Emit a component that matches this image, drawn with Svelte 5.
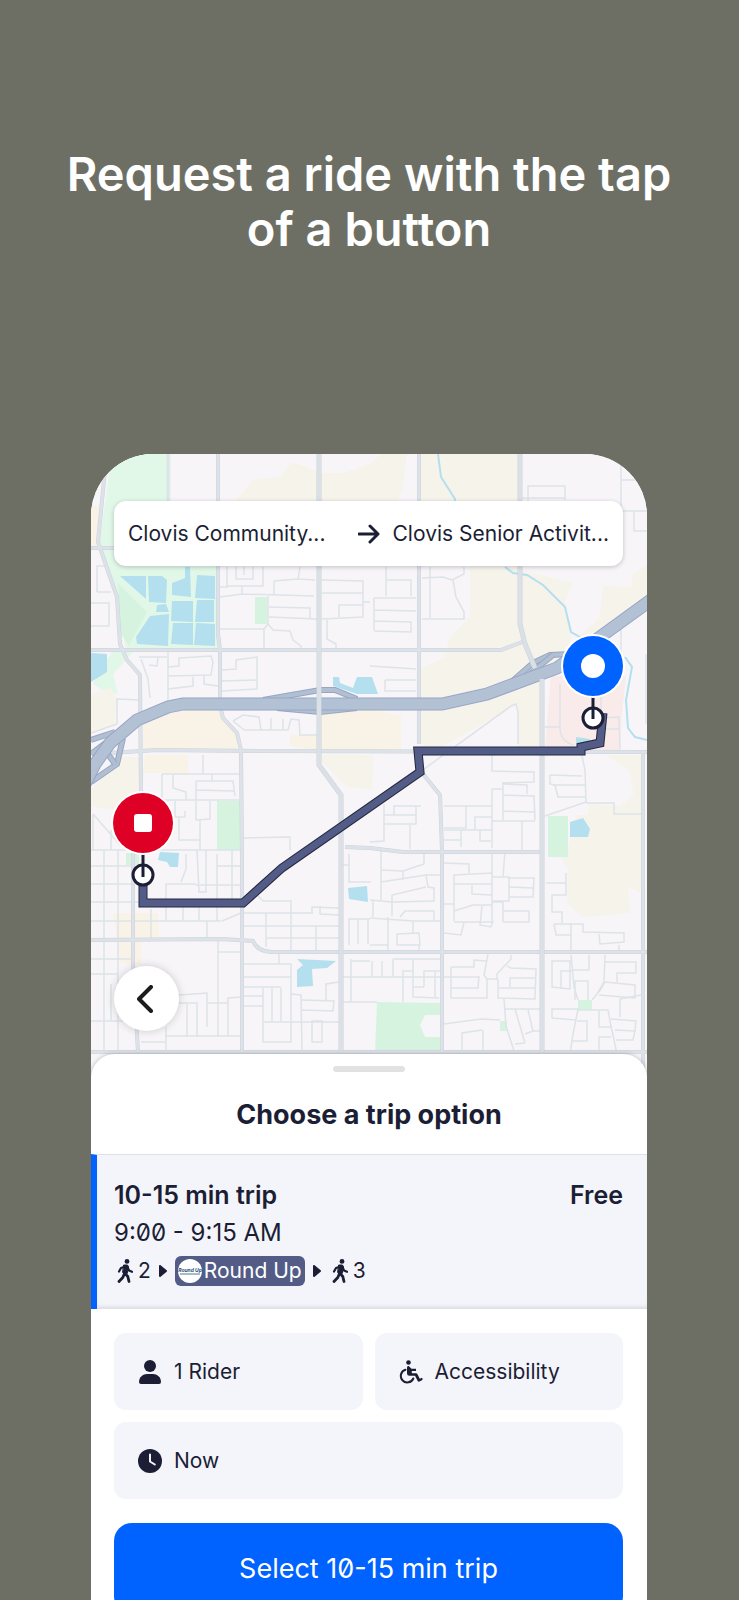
<script>
  const from = "Clovis Community...";
  const to = "Clovis Senior Activit...";

  // Land use areas, one list per fill
  const areas = [
    {
      name: "park-light",
      shapes: [
        "20,0 80,0 80,50 125,110 126,196 35,196 26,143 8,94 18,20",
        "21,198 42,198 22,220 27,240 14,238 2,230",
      ],
    },
    {
      name: "sand",
      shapes: [
        "142,50 162,26 189,23 201,8 232,19 252,19 279,10 290,0 316,0 311,36 306,50",
        "329,0 426,0 426,50 329,50",
        "379,112 427,112 434,117 481,129 474,149 480,180 478,206 449,220 449,296 427,296 427,250 345,296 329,290 329,215 352,204 359,183 379,163",
        "559,109 542,120 540,133 512,132 508,165 485,184 530,170 559,150",
        "485,361 550,361 550,439 537,433 539,459 492,463 476,449 477,416 470,403 477,395",
        "515,301 550,301 550,361 497,361 497,350 530,352 543,340 538,316",
        "229,301 282,301 281,335 256,333 232,309",
        "0,240 20,234 26,245 24,270 0,280",
        "30,303 49,303 49,336 22,356 0,352 0,336",
      ],
    },
    {
      name: "downtown",
      shapes: [
        "67,256 127,256 146,279 146,296 52,296 52,268",
        "54,301 97,301 97,319 52,319",
        "199,281 226,281 226,296 199,292",
        "229,259 279,255 310,262 310,296 229,296",
        "22,459 67,459 68,484 50,486 50,511 29,509",
        "0,52 8,52 6,92 0,92",
      ],
    },
    { name: "hospital", shapes: ["460,222 535,222 531,260 529,296 454,296"] },
    {
      name: "park",
      shapes: [
        "27,129 56,158 38,192 30,180",
        "164,143 176,143 176,170 164,170",
        "126,347 149,347 149,396 126,396",
        "457,362 477,362 477,403 457,403",
        "286,548 350,549 350,561 334,561 329,571 334,583 350,583 350,598 284,598",
        "487,546 501,546 501,556 487,556",
        "409,567 416,567 416,577 409,577",
        "35,399 48,399 48,411 35,411",
      ],
    },
    {
      name: "water",
      shapes: [
        "29,122 55,122 55,145",
        "57,122 71,122 76,126 75,149 58,148",
        "94,113 99,113 100,143 81,141 81,129 94,124",
        "106,121 124,122 124,145 104,144",
        "81,147 102,147 102,168 80,167",
        "106,146 123,146 123,168 104,168",
        "59,162 78,160 77,192 46,190 45,183",
        "82,169 102,169 102,191 80,190",
        "105,169 124,170 124,192 103,191",
        "66,151 75,150 78,158 65,158",
        "0,199 16,200 16,218 0,228",
        "242,223 248,223 249,229 262,234 266,223 281,223 287,240 266,240 242,232",
        "69,398 88,399 87,413 79,413 76,408 67,406",
        "257,434 276,432 277,448 258,445",
        "206,505 245,507 236,514 221,515 222,532 206,533 206,516 212,511",
        "479,368 492,364 499,375 497,383 479,383",
        "485,283 499,285 497,290 485,289",
      ],
    },
  ];

  const streams = [
    "M347 0L350 23 364 45V50",
    "M414 113L422 119 436 121 452 131 474 153 480 178 489 183",
    "M534 203L541 213 535 246 537 274 544 283 556 286",
  ];

  const streets = [
    "M129 133H136V113M129 143L151 140 223 142M151 132V140M136 132H172V113M145 113V125H162V113M153 113V121",
    "M183 141V127L207 125 224 126M207 125L209 113M178 153L219 154V164M178 163L226 165M177 142V170L173 175V195M129 175H173M177 170L182 176 199 177 202 186 210 192V196",
    "M231 126L272 127V163L231 165M231 139H272M248 163V151H272M236 166V185L245 190V195M272 148H279",
    "M0 149H18V172H0M6 138V112H14M6 138H20",
    "M295 113V142M296 126H320V142M283 144H325M283 144V176M283 156L325 157M283 167L320 168V178L283 177",
    "M331 124L352 123 361 126 373 120V113M339 113V164M362 126L365 143 373 158V165H331",
    "M437 47V32H474V46M430 44H474M530 10V57H556M530 26H550M543 57V77H556M530 160V200",
    "M48 203H76M77 198V246M77 213L88 212V204L120 202 122 208 120 221 77 222M77 235L102 232V223M113 222V230L127 232",
    "M131 216L145 215V206L166 203V235L131 237M131 227L166 226M50 205L57 225 59 244M58 211L66 212 67 203M26 270V245L50 246M0 279L26 270",
    "M142 267L152 261 168 263 170 276M153 276H197L200 265 208 266 209 281H226M180 276V264M192 276V265M142 267L153 276",
    "M112 301V320M71 320H148M71 320V346M82 320V334L95 338V346M105 327H142L144 342M105 327V346M105 336L143 337M71 346H148M121 320V327",
    "M84 347V363H94V357M105 347V366L119 365V347M88 364V386H109M109 366V395M152 384L199 383V396M2 360L30 392M2 360V396M20 376V396",
    "M329 318L420 252 425 250 427 258V290M294 226V237H325M294 226H325M279 212L325 215",
    "M454 273H469M469 230V275Q470 288 483 291M510 264L528 263 529 295M510 275H529M510 240V256M555 200V270",
    "M401 300V317L443 318V328L411 329M412 329V367M411 330L436 331V340M401 335H411M401 335V394M412 341L443 342 444 366M412 357L444 358M401 367H444M431 367V396",
    "M459 321L491 322M459 321V330L464 331 467 343H494M462 331H494M491 302L494 316 495 348 454 362M495 349H523V360H550",
    "M353 352H401M375 352V374H353M303 351V361M293 361H325V370H293M303 352H330M325 352V361M293 350V387L279 388M353 386H370M370 376V393M353 376H401M384 376V363H401M389 376V387H400M319 371V395",
    "M13 396V598M27 396V600M0 412H42M0 430H42M0 448H50M0 467H130M0 505H42M0 520H27M0 567H74M20 530V567M0 396H150",
    "M95 400V415L90 428M75 467V430H105M106 396L108 438H115V396M126 400V467M141 396V448M126 412H150M105 431H150M92 450V467M108 450V467M60 455V485M131 467L150 459M116 467V484",
    "M127 486V582M127 498H150M151 459H222M175 459V493M151 472H248M175 484H248M225 472V497M221 459V453L248 454M229 452V460L248 461M165 440L172 447H200V496",
    "M188 498V510M151 510H200M151 523H200M200 510V589M151 533H190M172 533V588H200M151 542H172M151 552H172M181 534V568M190 534V568M172 568H211",
    "M200 540L210 541 211 598M211 546L243 547 242 557 211 556M211 568H248M221 588V567H231V588ZM235 546V530L248 528M88 541L116 539V573M116 549H137M137 582V544L150 543M88 549H106V582M96 549V582M74 582H150M75 573V598M50 588H75",
    "M258 465V491M267 465V490M277 465V490M257 465H279M260 505V548M260 507H279M250 523H279M258 400V428H280M250 411H258M250 548H286",
    "M290 396V446M333 410V398M290 416L312 417 333 410M312 417V426M290 428L335 421H349M335 421L337 433 343 434V447L301 448M301 462V441L335 433M279 446L301 448M282 446V463M279 464L322 467V479M322 467H349",
    "M297 463V496M309 463L314 457H343V467M306 491V480L328 479 329 491ZM279 491H297M328 491V498",
    "M353 409L378 410V419M363 467V421L401 419V468H363M363 430H401M381 431V440L401 441M401 396V419M414 396L412 423M401 423H418V447H401M418 424H443L442 443H418M418 433L442 434M401 448H412V468M412 457H438V468H412",
    "M353 450H363M363 457L382 451H401M391 452L389 471 400 473 402 467M373 468L370 481 353 479",
    "M455 429H475V419M475 429V441H461V458H471V469M463 470L465 481H480M463 470H492V478L533 479V488L509 490 508 480M480 470V497M528 491V497",
    "M279 523H349M322 506V543L348 544M333 533V517H349M333 533H323M344 517V543M312 548V517H322M302 505H349M302 505V523M281 507V523M291 507V523",
    "M360 513H383V506L396 507M360 513V544H396V525L393 521 397 500M360 534H387L388 522M353 523H388M396 525H406V520L420 505V501M407 525V544L444 545 445 515 420 514 416 512M407 534H444M419 533V524H445",
    "M413 545L415 572 424 600M414 555H450M424 555L434 589M437 556L442 577H450M424 590L434 589M353 570L390 565 409 566M371 598V579L391 576M392 576V598M434 580L442 577",
    "M461 507H479V535L461 533ZM470 535V517H481M480 501L483 533 487 546M498 501V516H481M514 501L513 528 506 540 501 546M514 508H545V519H526V528M508 538L514 528 544 531V544L508 541",
    "M461 564V555H487L482 580 479 600M461 564L485 566M487 556H517L520 572 526 600M508 556V573H520M529 545V563M520 565L545 567 544 577 542 586H525M544 577L524 576M486 567H496V587H481M508 600V583H520M529 545L550 541M484 546V527H497V546",
  ];

  const avenues = [
    "M14 16L7 88 26 143 29 190 36 206 49 221 50 340 50 396M42 396V510L47 598",
    "M127 0V180L129 196V252L132 264 146 279 150 296 151 406V598",
    "M328 0V290M332 320L349 341 351 396V598",
    "M0 94H24M0 196H410L434 187M19 299L66 296 170 297 556 298",
    "M254 393L279 394 312 398H450M0 486L130 485 162 487Q166 497 180 498H556M0 598H556",
    "M552 298V620",
  ];

  const boulevards = [
    "M228 0V311L250 341V598",
    "M429 0V170L434 190 444 214",
    "M451 225V598",
  ];

  const freeway = "M-8 334L4 310 19 289 46 266 77 253 92 250H351L396 240 466 214 509 183 560 146";
  const ramps = [
    "M172 246L229 236H244L266 245",
    "M186 254L229 258 266 254",
    "M418 230L442 209 459 201 480 200",
    "M434 224L462 201",
    "M0 286L24 278",
    "M0 300L16 288",
    "M32 284L26 310 0 328",
    "M14 296L24 310",
  ];
  const route = "M512 259L509 289 490 293V297H327L329 318 191 414 152 449H52V421";
</script>

<main>
  <h1>Request a ride with the tap of a button</h1>

  <div class="phone">
    <section class="map-area">
      <svg class="map" viewBox="0 0 556 620" role="img" aria-label="Route map">
        {#each areas as area}
          {#each area.shapes as points}
            <polygon class={area.name} {points} />
          {/each}
        {/each}
        {#each streams as d}
          <path class="stream" {d} />
        {/each}
        {#each streets as d}
          <path class="street" {d} />
        {/each}
        <path class="street wide" d="M77 0V50" />
        {#each avenues as d}
          <path class="avenue-edge" {d} />
        {/each}
        {#each avenues as d}
          <path class="avenue" {d} />
        {/each}
        {#each ramps as d}
          <path class="ramp-edge" {d} />
          <path class="ramp" {d} />
        {/each}
        <path class="freeway-edge" d={freeway} />
        <path class="freeway" d={freeway} />
        {#each boulevards as d}
          <path class="boulevard-edge" {d} />
          <path class="boulevard" {d} />
        {/each}

        <path class="route-edge" d={route} />
        <path class="route" d={route} />

        <!-- drop-off -->
        <circle class="stop" cx="52" cy="421" r="10" />
        <path class="stem" d="M52 396V423" />
        <circle cx="52" cy="369" r="32" fill="#fff" />
        <circle cx="52" cy="369" r="30" fill="#df0025" />
        <rect x="43" y="360" width="18" height="18" rx="3" fill="#fff" />

        <!-- pickup -->
        <circle class="stop" cx="502" cy="264" r="10" />
        <path class="stem" d="M502 238V265" />
        <circle cx="502" cy="212" r="32" fill="#fff" />
        <circle cx="502" cy="212" r="30" fill="#0062ff" />
        <circle cx="502" cy="212" r="12" fill="#fff" />
      </svg>

      <div class="journey">
        <button class="place">{from}</button>
        <svg class="arrow" viewBox="0 0 22 20" aria-hidden="true">
          <path d="M1 10H20M12 2L20 10 12 18" />
        </svg>
        <button class="place">{to}</button>
      </div>

      <button class="back" aria-label="Back">
        <svg viewBox="0 0 16 28" aria-hidden="true"><path d="M14 2L2 14 14 26" /></svg>
      </button>
    </section>

    <section class="sheet">
      <div class="handle"></div>
      <h2>Choose a trip option</h2>

      <button class="trip">
        <span class="trip-head">
          <strong>10-15 min trip</strong>
          <strong>Free</strong>
        </span>
        <span class="time">9:00 - 9:15 AM</span>
        <span class="legs">
          {@render walker()}
          <span>2</span>
          {@render chevron()}
          <span class="line">
            <svg class="logo" viewBox="0 0 24 24" aria-hidden="true">
              <circle cx="12" cy="12" r="12" fill="#fff" />
              <text x="12" y="13" text-anchor="middle">Round Up</text>
              <path d="M2 15H22" stroke="#4d7895" stroke-width="1" />
            </svg>
            Round Up
          </span>
          {@render chevron()}
          {@render walker()}
          <span>3</span>
        </span>
      </button>

      <div class="footer">
        <div class="options">
          <button class="chip">
            <svg viewBox="0 0 24 24" aria-hidden="true">
              <circle cx="12" cy="6" r="6" />
              <path d="M1 22C1 17 5 14 9 14H15C19 14 23 17 23 22Q23 24 21 24H3Q1 24 1 22Z" />
            </svg>
            1 Rider
          </button>
          <button class="chip">
            <svg viewBox="0 0 24 24" aria-hidden="true">
              <circle cx="9.500" cy="2.500" r="2.300" />
              <path d="M8 7.500Q8 5.800 9.700 6L12.500 8.700H17V11H12.800V13.200H17Q18 13.200 18.500 14.200L20.800 18.700 23 17.800Q24 18.800 23.400 20L20.500 21.600Q19.300 22 18.700 20.900L16 15.800H10.500Q8 15.800 8 13.500Z" />
              <path class="wheel" d="M6.500 9.700A6.500 6.500 0 1 0 14.300 18.500" />
            </svg>
            Accessibility
          </button>
          <button class="chip wide">
            <svg viewBox="0 0 24 24" aria-hidden="true">
              <circle cx="12" cy="12" r="12" />
              <path class="hands" d="M12 5.500V12.500L16.800 15.500" />
            </svg>
            Now
          </button>
        </div>
        <button class="select">Select 10-15 min trip</button>
      </div>
    </section>
  </div>
</main>

{#snippet walker()}
  <svg class="walker" viewBox="0 0 16 24" aria-hidden="true">
    <circle cx="10" cy="2.400" r="2.400" />
    <path d="M9 8L7.500 14L10.800 17.500 12 22.500M7.500 14.500L5.800 18.500 2 22.500" stroke-width="2.800" />
    <path d="M8.500 7.500L4 9 2 12.500M10.500 8L12 11.500 15 12.800" stroke-width="2.200" />
    <path d="M7 6H10.500L11.500 8 10.200 14.500 7 15 5.800 13.500Z" stroke-width="1" class="body" />
  </svg>
{/snippet}

{#snippet chevron()}
  <svg class="chevron" viewBox="0 0 8 12" aria-hidden="true"><path d="M1 1V11L7 6Z" /></svg>
{/snippet}

<style>
  :global(body) {
    background: #6d6f65;
  }

  main {
    box-sizing: border-box;
    height: 100vh;
    padding: 146px 92px 0 91px;
    overflow: hidden;
    background: #6d6f65;
    color: #1b1e34;
    font-family: Inter, "Liberation Sans", sans-serif;
  }

  button {
    border: 0;
    padding: 0;
    background: none;
    color: inherit;
    font: inherit;
    cursor: pointer;
  }

  h1 {
    margin: 0 -40px 198px;
    color: #fff;
    font-size: 47px;
    font-weight: 600;
    line-height: 55px;
    text-align: center;
  }

  .phone {
    border-radius: 62px 62px 0 0;
    overflow: hidden;
    background: #fff;
  }

  .map-area {
    position: relative;
  }

  .map {
    display: block;
    width: 100%;
    background: #f7f5f7;
    fill: none;
  }

  .park-light { fill: #e1f8e8; }
  .park { fill: #d6f3e0; }
  .sand { fill: #f6f3ea; }
  .downtown { fill: #f9f2e6; }
  .hospital { fill: #f9ebea; }
  .water { fill: #b4dfef; }

  .stream {
    stroke: #b4dfef;
    stroke-width: 2;
  }

  .street {
    stroke: #dde3e9;
    stroke-width: 1.5;
  }

  .street.wide {
    stroke-width: 3;
  }

  .avenue-edge {
    stroke: #ccd3dc;
    stroke-width: 4;
  }

  .avenue {
    stroke: #dde2e8;
    stroke-width: 3;
  }

  .boulevard-edge {
    stroke: #ccd3dc;
    stroke-width: 5;
  }

  .boulevard {
    stroke: #dae0e6;
    stroke-width: 4;
  }

  .ramp-edge {
    stroke: #98a6c2;
    stroke-width: 6;
  }

  .ramp {
    stroke: #b1bfd2;
    stroke-width: 4;
  }

  .freeway-edge {
    stroke: #98a6c6;
    stroke-width: 13;
  }

  .freeway {
    stroke: #b3c1d4;
    stroke-width: 11;
  }

  .route-edge {
    stroke: #242941;
    stroke-width: 9;
  }

  .route {
    stroke: #535c86;
    stroke-width: 7;
  }

  .stop {
    fill: #fff;
    stroke: #1b1e34;
    stroke-width: 3;
  }

  .stem {
    stroke: #1b1e34;
    stroke-width: 3;
  }

  .journey {
    position: absolute;
    top: 47px;
    left: 23px;
    right: 24px;
    display: flex;
    align-items: center;
    justify-content: space-between;
    box-sizing: border-box;
    height: 65px;
    padding: 0 14px;
    border-radius: 12px;
    background: #fff;
    box-shadow: 0 1px 4px rgba(26, 29, 51, 0.25);
    font-size: 21px;
  }

  .place {
    white-space: nowrap;
  }

  .arrow {
    width: 22px;
    height: 20px;
    margin-left: 20px;
    fill: none;
    stroke: #1b1e34;
    stroke-width: 3;
    stroke-linecap: round;
    stroke-linejoin: round;
  }

  .back {
    position: absolute;
    bottom: 43px;
    left: 23px;
    display: grid;
    place-items: center;
    width: 65px;
    height: 65px;
    border-radius: 50%;
    background: #fff;
    box-shadow: 0 0 8px rgba(26, 29, 51, 0.2);
  }

  .back svg {
    width: 16px;
    height: 28px;
    margin-right: 4px;
    fill: none;
    stroke: #1c1c1e;
    stroke-width: 4;
    stroke-linecap: round;
    stroke-linejoin: round;
  }

  .sheet {
    position: relative;
    margin-top: -20px;
    padding-top: 12px;
    border-radius: 24px 24px 0 0;
    background: #fff;
    box-shadow: 0 0 4px rgba(26, 29, 51, 0.3);
  }

  .handle {
    width: 72px;
    height: 6px;
    margin: 0 auto;
    border-radius: 3px;
    background: #e2e2e2;
  }

  h2 {
    margin: 0;
    padding: 27px 0 23px;
    font-size: 27px;
    font-weight: 700;
    line-height: 32px;
    text-align: center;
  }

  .trip {
    display: flex;
    flex-direction: column;
    gap: 8px;
    box-sizing: border-box;
    width: 100%;
    padding: 25px 24px 23px 17px;
    border-top: 1px solid #dfe1e6;
    border-left: 6px solid #0062ff;
    background: #f4f5fa;
    box-shadow: inset 0 -4px 4px -2px rgba(26, 29, 51, 0.12);
    font-size: 24px;
    line-height: 30px;
    text-align: left;
  }

  .trip-head {
    display: flex;
    justify-content: space-between;
    font-size: 25px;
  }

  .trip-head strong {
    font-weight: 600;
  }

  .time,
  .select {
    font-feature-settings: "zero";
  }

  .legs {
    display: flex;
    align-items: center;
    font-size: 21px;
  }

  .walker {
    width: 16px;
    height: 24px;
    margin: 0 5px 0 3px;
    fill: #1b1e34;
  }

  .walker path {
    fill: none;
    stroke: #1b1e34;
    stroke-linecap: round;
    stroke-linejoin: round;
  }

  .walker .body {
    fill: #1b1e34;
  }

  .chevron {
    width: 8px;
    height: 12px;
    margin: 0 8px;
    fill: #1b1e34;
    stroke: #1b1e34;
    stroke-width: 2;
    stroke-linejoin: round;
  }

  .line {
    display: flex;
    align-items: center;
    gap: 2px;
    padding: 0 3px;
    border-radius: 6px;
    background: #535c86;
    color: #fff;
  }

  .logo {
    width: 24px;
    height: 24px;
  }

  .logo text {
    fill: #1f4e79;
    font-size: 5px;
    font-style: italic;
    font-weight: 700;
  }

  .footer {
    display: grid;
    gap: 24px;
    padding: 24px 24px 0 23px;
  }

  .options {
    display: grid;
    grid-template-columns: 1fr 1fr;
    gap: 12px;
  }

  .chip {
    display: flex;
    align-items: center;
    gap: 12px;
    height: 77px;
    padding: 0 24px;
    border-radius: 12px;
    background: #f4f5fa;
    font-size: 21px;
  }

  .chip.wide {
    grid-column: span 2;
  }

  .chip svg {
    width: 24px;
    height: 24px;
    fill: #1b1e34;
  }

  .chip .wheel {
    fill: none;
    stroke: #1b1e34;
    stroke-width: 2;
    stroke-linecap: round;
  }

  .chip .hands {
    fill: none;
    stroke: #f4f5fa;
    stroke-width: 2;
    stroke-linecap: round;
  }

  .select {
    height: 91px;
    border-radius: 18px;
    background: #0062ff;
    color: #fff;
    font-size: 27px;
  }
</style>
